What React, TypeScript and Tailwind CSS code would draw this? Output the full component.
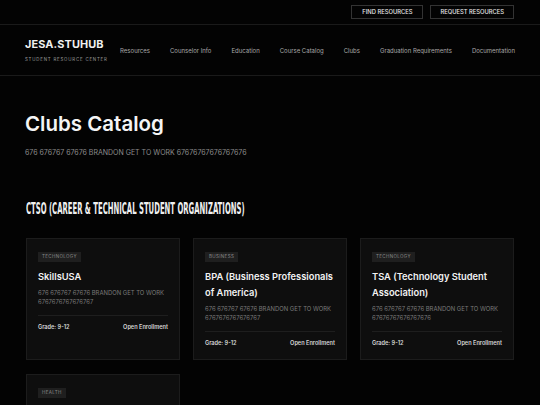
import React from "react";

interface Club {
  tag: string;
  name: string;
  desc: string;
}

const clubs: Club[] = [
  { tag: "Technology", name: "SkillsUSA", desc: "676 676767 67676 BRANDON GET TO WORK 6767676767676767" },
  { tag: "Business", name: "BPA (Business Professionals of America)", desc: "676 676767 67676 BRANDON GET TO WORK 6767676767676767" },
  { tag: "Technology", name: "TSA (Technology Student Association)", desc: "676 676767 67676 BRANDON GET TO WORK 67676767676767676" },
  { tag: "Health", name: "HOSA (Future Health Professionals)", desc: "676 676767 67676 BRANDON GET TO WORK 6767676767676767" },
];

const navItems = [
  "Resources",
  "Counselor Info",
  "Education",
  "Course Catalog",
  "Clubs",
  "Graduation Requirements",
  "Documentation",
];

function ClubCard({ club }: { club: Club }): React.ReactElement {
  return (
    <div className="flex flex-col border border-[#1c1c1c] bg-[#0e0e0e] px-[11px] pt-[13px] pb-[12px]">
      <span className="self-start bg-[#1f1f1f] px-[4px] py-[3px] text-[4.5px] uppercase leading-none tracking-[0.08em] text-[#8a8a8a]">
        {club.tag}
      </span>
      <h3 className="mt-[7px] text-[9.3px] font-semibold leading-[16px] text-[#f2f2f2]">{club.name}</h3>
      <p className="mt-[3px] text-[5.9px] leading-[9px] text-[#7a7a7a]">{club.desc}</p>
      <div className="mt-[9px] flex items-center justify-between border-t border-[#1e1e1e] pt-[9px] text-[5.6px] font-semibold leading-none text-[#d8d8d8]">
        <span>Grade: 9-12</span>
        <span>Open Enrollment</span>
      </div>
    </div>
  );
}

export default function App(): React.ReactElement {
  return (
    <div className="min-h-[405px] bg-[#030303] text-white" style={{ fontFamily: "Inter, 'Noto Sans', sans-serif" }}>
      {/* top bar */}
      <div className="flex h-[25px] items-center justify-end gap-[7px] border-b border-[#1a1a1a] pr-[26px]">
        <button className="h-[14px] border border-[#333] px-[10px] text-[5.8px] font-medium uppercase leading-none text-[#e8e8e8]">
          Find Resources
        </button>
        <button className="h-[14px] border border-[#333] px-[9px] text-[5.8px] font-medium uppercase leading-none text-[#e8e8e8]">
          Request Resources
        </button>
      </div>

      {/* header */}
      <div className="flex h-[51px] items-center border-b border-[#1a1a1a] pl-[25px] pr-[25px]">
        <div className="flex flex-col pt-[2px]">
          <span className="text-[10.9px] font-bold leading-none tracking-[0.01em] text-[#f0f0f0]">JESA.STUHUB</span>
          <span className="mt-[8px] text-[4.4px] uppercase leading-none tracking-[0.18em] text-[#9a9a9a]">
            Student Resource Center
          </span>
        </div>
        <nav className="ml-auto flex items-center gap-[20px] text-[6px] text-[#a8a8a8]">
          {navItems.map((item) => (
            <span key={item}>{item}</span>
          ))}
        </nav>
      </div>

      {/* hero */}
      <div className="px-[25px] pt-[38px]">
        <h1 className="text-[20.5px] font-semibold leading-none text-[#f5f5f5]">Clubs Catalog</h1>
        <p className="mt-[14px] text-[7px] leading-none text-[#8c8c8c]">
          676 676767 67676 BRANDON GET TO WORK 67676767676767676
        </p>
      </div>

      {/* section */}
      <div className="px-[26px] pt-[46px]">
        <h2
          className="origin-left scale-x-[0.51] whitespace-nowrap text-[15px] font-bold uppercase leading-none text-[#f0f0f0]"
          style={{ fontFamily: "'DejaVu Sans Condensed', 'DejaVu Sans', sans-serif" }}
        >
          CTSO (Career &amp; Technical Student Organizations)
        </h2>
        <div className="mt-[21px] grid grid-cols-3 gap-x-[13px] gap-y-[14px]">
          {clubs.map((club, i) => (
            <ClubCard key={i} club={club} />
          ))}
        </div>
      </div>
    </div>
  );
}
